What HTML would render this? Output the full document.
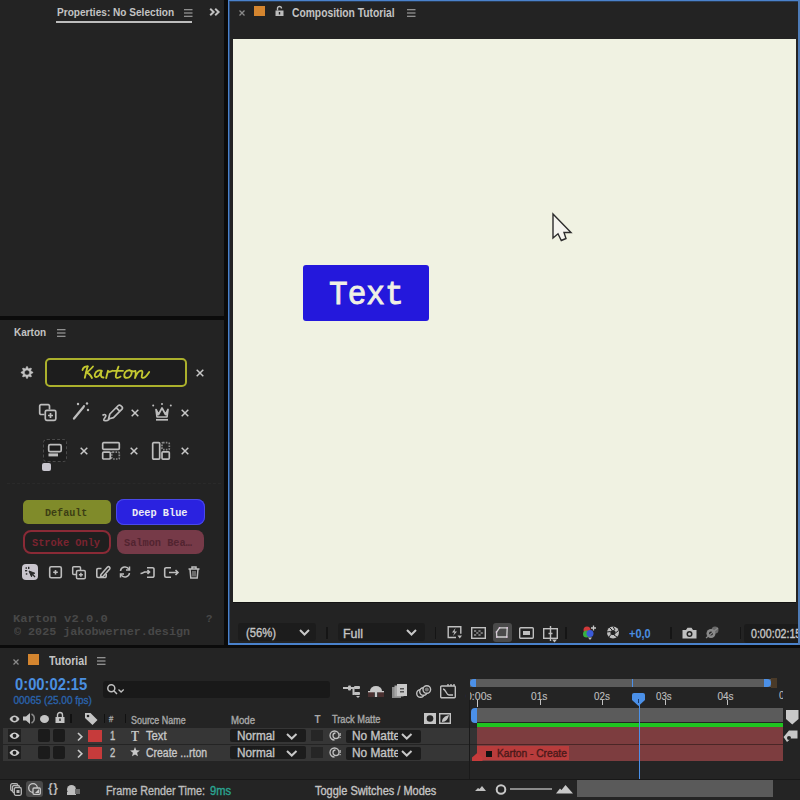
<!DOCTYPE html>
<html><head><meta charset="utf-8">
<style>
*{margin:0;padding:0;box-sizing:border-box}
html,body{width:800px;height:800px;overflow:hidden;background:#0b0b0b;font-family:"Liberation Sans",sans-serif}
.a{position:absolute}
.pn{position:absolute;background:#232323}
.t{position:absolute;white-space:nowrap;line-height:1;transform-origin:0 0}
svg{position:absolute;overflow:visible}
</style></head><body>
<!-- Properties panel -->
<div class="pn" style="left:0;top:0;width:224px;height:316px"></div>
<div class="t" style="left:57.08px;top:6.60px;font-size:11px;font-weight:bold;color:#c4c4c4;transform:scaleX(0.9167)">Properties: No Selection</div>
<div class="a" style="left:56px;top:21px;width:136px;height:2px;background:#bdbdbd"></div>
<svg style="left:184px;top:9px" width="9" height="8" viewBox="0 0 9 8"><path d="M0 0.75H8.5M0 4H8.5M0 7.25H8.5" stroke="#b4b4b4" stroke-width="1.1"/></svg>
<svg style="left:209px;top:8px" width="12" height="8" viewBox="0 0 12 8"><path d="M1.2 0.8L4.6 4L1.2 7.2M6.2 0.8L9.6 4L6.2 7.2" stroke="#c0c0c0" stroke-width="2" fill="none"/></svg>

<!-- Karton panel -->
<div class="pn" style="left:0;top:320px;width:224px;height:325px"></div>
<div class="t" style="left:13.93px;top:327.00px;font-size:11.5px;font-weight:bold;color:#c4c4c4;transform:scaleX(0.8667)">Karton</div>
<svg style="left:57px;top:329px" width="9" height="8" viewBox="0 0 9 8"><path d="M0 0.75H8.5M0 4H8.5M0 7.25H8.5" stroke="#b4b4b4" stroke-width="1.1"/></svg>
<!-- gear -->
<svg style="left:21px;top:366px" width="12" height="13" viewBox="0 0 12 13"><path d="M5.72 0.51 L6.28 0.51 L7.49 2.90 L10.04 2.06 L10.44 2.46 L9.60 5.01 L11.99 6.22 L11.99 6.78 L9.60 7.99 L10.44 10.54 L10.04 10.94 L7.49 10.10 L6.28 12.49 L5.72 12.49 L4.51 10.10 L1.96 10.94 L1.56 10.54 L2.40 7.99 L0.01 6.78 L0.01 6.22 L2.40 5.01 L1.56 2.46 L1.96 2.06 L4.51 2.90Z M8.60 6.5A2.6 2.6 0 1 0 3.40 6.5A2.6 2.6 0 1 0 8.60 6.5Z" fill="#c4c4c4" fill-rule="evenodd" stroke="#c4c4c4" stroke-width="0.6" stroke-linejoin="round"/></svg>
<!-- Karton box -->
<div class="a" style="left:45px;top:358px;width:142px;height:29px;border:2px solid #abb02c;border-radius:5px;background:#1d1d1d"></div>
<svg style="left:78px;top:360px" width="76" height="24" viewBox="0 0 76 24"><g stroke="#c4c830" stroke-width="1.85" fill="none" stroke-linecap="round" stroke-linejoin="round"><path d="M4.5 10C5 7.5 7.5 6 9.8 6.5"/><path d="M9.5 6.5L6.8 17.8"/><path d="M15 6.5C12.5 9.5 10.5 11.8 8 12.5C11 12.8 12.8 15.5 14 18"/><path d="M24 11C22 9.8 17.8 10.2 16.8 14.5C16.3 17.5 19 18 21.5 15L23.6 10.8C22.6 14 22.2 17.6 25.5 17.5"/><path d="M28.2 18L30 10.8C31.2 12.2 33 11.8 34.5 10.8"/><path d="M40.5 6.6C39.2 10 37.8 14.5 37.8 16.5C37.8 18.6 40.5 18.2 42.5 16.6"/><path d="M35.5 10.8H45"/><path d="M51 10.2C47.5 10.2 46 14 46.3 16C46.7 18.6 50.5 18.5 52.5 16C54.5 13.5 54 10.2 51 10.2C53 11.2 55 11.5 57 11.2"/><path d="M57.5 11C58 12.5 58 14.5 57 18C58.5 14 60.5 10.6 63.2 10.6C65.2 10.6 64.2 14 63.7 16C63.2 18 65.2 18.5 67.2 17C69.2 15.5 70.5 13 71.2 12"/></g></svg>
<svg style="left:196px;top:369px" width="8" height="8" viewBox="0 0 8 8"><path d="M0.7 0.7L7.3 7.3M7.3 0.7L0.7 7.3" stroke="#c8c8c8" stroke-width="1.5"/></svg>
<!-- row2 icons -->
<svg style="left:39px;top:404px" width="18" height="17" viewBox="0 0 18 17"><g stroke="#bdbdbd" stroke-width="1.7" fill="none"><path d="M5.5 10.5H2a1.3 1.3 0 0 1-1.3-1.3V2A1.3 1.3 0 0 1 2 .7h7.2a1.3 1.3 0 0 1 1.3 1.3v3.5"/><rect x="6.3" y="6.3" width="10.5" height="10" rx="1.5"/><path d="M11.5 9v5M9 11.5h5"/></g></svg>
<svg style="left:72px;top:402px" width="18" height="18" viewBox="0 0 18 18"><g stroke="#bdbdbd" stroke-width="2.3" fill="none" stroke-linecap="round"><path d="M2 16.5L11.5 5"/></g><g fill="#bdbdbd"><circle cx="6" cy="2" r="1.2"/><circle cx="15" cy="1.5" r="1.2"/><circle cx="16" cy="8" r="1.2"/><circle cx="12" cy="4" r="1"/></g></svg>
<svg style="left:101px;top:402px" width="21" height="21" viewBox="0 0 21 21"><g stroke="#bdbdbd" stroke-width="1.7" fill="none" stroke-linejoin="round"><g transform="translate(7.5 17) rotate(-45)"><path d="M0 0L4.5-2.6H16.5a1.6 1.6 0 0 1 1.6 1.6V1a1.6 1.6 0 0 1-1.6 1.6H4.5Z"/><path d="M13.5-2.6V2.6"/></g><path d="M1.5 13.5c2.5-2 4.5-.5 2.5 2s-1.5 3.5 1 3.2 2-1 3.5-1.5"/></g></svg>
<svg style="left:131px;top:408.5px" width="8" height="8" viewBox="0 0 8 8"><path d="M0.7 0.7L7.3 7.3M7.3 0.7L0.7 7.3" stroke="#c8c8c8" stroke-width="1.5"/></svg>
<svg style="left:152px;top:403px" width="20" height="18" viewBox="0 0 20 18"><g stroke="#bdbdbd" stroke-width="1.7" fill="none" stroke-linejoin="round"><path d="M4 6.5L6.5 11.5 10 5 13.5 11.5 16 6.5 15 14H5z"/><path d="M4 16.8h12"/></g><g fill="#bdbdbd"><circle cx="1.2" cy="2.5" r="1"/><circle cx="10" cy="1" r="1"/><circle cx="18.8" cy="2.5" r="1"/></g></svg>
<svg style="left:181px;top:408.5px" width="8" height="8" viewBox="0 0 8 8"><path d="M0.7 0.7L7.3 7.3M7.3 0.7L0.7 7.3" stroke="#c8c8c8" stroke-width="1.5"/></svg>
<!-- row3 icons -->
<div class="a" style="left:42.5px;top:439px;width:24px;height:23px;border:1px dashed #4a4a4a;border-radius:4px;background:#1e1e1e"></div>
<svg style="left:48px;top:444px" width="14" height="13" viewBox="0 0 14 13"><g stroke="#bdbdbd" stroke-width="1.7" fill="none"><rect x="0.7" y="0.7" width="12.5" height="7" rx="1.5"/></g><rect x="0.5" y="9.4" width="9.5" height="3" fill="#bdbdbd"/></svg>
<div class="a" style="left:42px;top:462.5px;width:8.5px;height:8.5px;border-radius:2px;background:#c8c6ce"></div>
<svg style="left:80px;top:446.5px" width="8" height="8" viewBox="0 0 8 8"><path d="M0.7 0.7L7.3 7.3M7.3 0.7L0.7 7.3" stroke="#c8c8c8" stroke-width="1.5"/></svg>
<svg style="left:101.5px;top:442px" width="18" height="18" viewBox="0 0 18 18"><g stroke="#bdbdbd" stroke-width="1.7" fill="none"><rect x="0.7" y="0.7" width="16.6" height="6.6" rx="1"/><rect x="0.7" y="10.2" width="7.6" height="6.8" rx="1"/><rect x="9.7" y="10.2" width="7.6" height="6.8" rx="1" stroke-dasharray="1.6 1.2" stroke="#8a8a8a"/></g></svg>
<svg style="left:130px;top:446.5px" width="8" height="8" viewBox="0 0 8 8"><path d="M0.7 0.7L7.3 7.3M7.3 0.7L0.7 7.3" stroke="#c8c8c8" stroke-width="1.5"/></svg>
<svg style="left:152px;top:442px" width="18" height="18" viewBox="0 0 18 18"><g stroke="#bdbdbd" stroke-width="1.7" fill="none"><rect x="0.7" y="0.7" width="7" height="16.4" rx="1"/><rect x="10" y="0.7" width="7.3" height="7" rx="1" stroke-dasharray="1.6 1.2" stroke="#8a8a8a"/><rect x="10" y="9.8" width="7.3" height="7.3" rx="1"/></g></svg>
<svg style="left:180.5px;top:446.5px" width="8" height="8" viewBox="0 0 8 8"><path d="M0.7 0.7L7.3 7.3M7.3 0.7L0.7 7.3" stroke="#c8c8c8" stroke-width="1.5"/></svg>
<!-- faint dashed separator -->
<div class="a" style="left:7px;top:483px;width:214px;height:0;border-top:1px dashed #2a2a2a"></div>
<!-- buttons -->
<div class="a" style="left:22.5px;top:499.5px;width:88px;height:24.5px;border-radius:5px;background:#808b2a"></div>
<div class="t" style="left:45.00px;top:509.00px;font-family:'Liberation Mono',monospace;font-size:10px;font-weight:bold;color:#3c3e14;transform:scaleX(1.0073)">Default</div>
<div class="a" style="left:116px;top:499px;width:89px;height:25.5px;border-radius:8px;background:#2a22e0;box-shadow:0 0 0 1px #4a4ae8 inset"></div>
<div class="t" style="left:132.00px;top:509.00px;font-family:'Liberation Mono',monospace;font-size:10px;font-weight:bold;color:#ececf4;transform:scaleX(1.0278)">Deep Blue</div>
<div class="a" style="left:22.5px;top:529.5px;width:88px;height:24.5px;border-radius:8px;border:2px solid #8a2a36;background:#1f1f1f"></div>
<div class="t" style="left:32.00px;top:539.00px;font-family:'Liberation Mono',monospace;font-size:10px;font-weight:bold;color:#7a2430;transform:scaleX(1.0303)">Stroke Only</div>
<div class="a" style="left:116.5px;top:529.5px;width:87.5px;height:24.5px;border-radius:8px;background:#763a48"></div>
<div class="t" style="left:124.00px;top:539.00px;font-family:'Liberation Mono',monospace;font-size:10px;font-weight:bold;color:#522430;transform:scaleX(1.0273)">Salmon Bea…</div>
<!-- bottom icons -->
<div class="a" style="left:22px;top:564px;width:16px;height:16px;border-radius:4px;background:#c9c5cd"></div>
<svg style="left:24px;top:566px" width="12" height="12" viewBox="0 0 12 12"><path d="M5 5L10.8 7.2 8.5 8.3 7.5 10.8Z" fill="#2a2a2a" stroke="#2a2a2a" stroke-width="1" stroke-linejoin="round"/><path d="M8.6 8.4L11 11" stroke="#2a2a2a" stroke-width="1.3"/><g fill="#2a2a2a"><rect x="1" y="4" width="2.2" height="1.4"/><rect x="4" y="0.8" width="1.4" height="2.2"/><rect x="1.5" y="1.3" width="1.5" height="1.5"/><rect x="1.8" y="7.2" width="1.5" height="1.5"/></g></svg>
<svg style="left:49px;top:566px" width="13" height="12.5" viewBox="0 0 13 12.5"><g stroke="#bdbdbd" stroke-width="1.6" fill="none"><rect x="0.7" y="0.7" width="11.6" height="11" rx="1.5"/><path d="M6.5 4v4.5M4.2 6.2h4.6"/></g></svg>
<svg style="left:72px;top:565.5px" width="14" height="13.5" viewBox="0 0 14 13.5"><g stroke="#bdbdbd" stroke-width="1.5" fill="none"><path d="M4.5 8.5H1.7A1 1 0 0 1 .7 7.5V1.7A1 1 0 0 1 1.7.7h5.8a1 1 0 0 1 1 1v2.8"/><rect x="4.5" y="4.5" width="8.8" height="8.3" rx="1.3"/><path d="M8.9 6.8v4M6.9 8.8h4"/></g></svg>
<svg style="left:95.5px;top:564.5px" width="14" height="13.5" viewBox="0 0 14 13.5"><g stroke="#bdbdbd" stroke-width="1.6" fill="none" stroke-linejoin="round"><path d="M5 9.5l6.5-7.5a1.5 1.5 0 0 1 2.2 2L7 11.5 4.5 12z"/><path d="M5.5 3.5H2a1.2 1.2 0 0 0-1.2 1.2v6.6A1.2 1.2 0 0 0 2 12.5h7a1.2 1.2 0 0 0 1.2-1.2V9"/></g></svg>
<svg style="left:119px;top:566px" width="12" height="12" viewBox="0 0 12 12"><g stroke="#bdbdbd" stroke-width="1.5" fill="none"><path d="M1.5 5A4.5 4.5 0 0 1 10 3.5M10.5 7A4.5 4.5 0 0 1 2 8.5"/><path d="M10.5 0.5v3.5H7M1.5 11.5V8H5"/></g></svg>
<svg style="left:140px;top:567px" width="15" height="11" viewBox="0 0 15 11"><g stroke="#bdbdbd" stroke-width="1.6" fill="none"><path d="M7 .7h5.5a1.5 1.5 0 0 1 1.5 1.5v6.6a1.5 1.5 0 0 1-1.5 1.5H7"/><path d="M.5 6.5c2 0 3-1 4-1.5h4.5M7.5 3l2 2-2 2"/></g></svg>
<svg style="left:164px;top:567px" width="15" height="11" viewBox="0 0 15 11"><g stroke="#bdbdbd" stroke-width="1.6" fill="none"><path d="M7 .7H2.2A1.5 1.5 0 0 0 .7 2.2v6.6a1.5 1.5 0 0 0 1.5 1.5H7"/><path d="M5 5.5h9M11.5 3l2.5 2.5-2.5 2.5"/></g></svg>
<svg style="left:188px;top:565.5px" width="12" height="13" viewBox="0 0 12 13"><g stroke="#bdbdbd" stroke-width="1.5" fill="none"><path d="M.5 3h11M4 3V1h4v2M2 3l.8 9h6.4L10 3"/></g><rect x="4" y="5" width="4" height="5.5" fill="#6a6a6a"/></svg>
<!-- footer -->
<div class="t" style="left:12.69px;top:614.20px;font-family:'Liberation Mono',monospace;font-size:11px;font-weight:bold;color:#484848;transform:scaleX(1.1059)">Karton v2.0.0</div>
<div class="t" style="left:206.40px;top:614.20px;font-family:'Liberation Mono',monospace;font-size:11px;font-weight:bold;color:#484848;transform:scaleX(0.9667)">?</div>
<div class="t" style="left:13.80px;top:626.70px;font-family:'Liberation Mono',monospace;font-size:11px;font-weight:bold;color:#484848;transform:scaleX(1.0667)">© 2025 jakobwerner.design</div>
<!-- Comp panel -->
<div class="a" style="left:227.5px;top:0;width:572.5px;height:645px;background:#4a82cc"></div>
<div class="pn" style="left:229px;top:1px;width:569px;height:642px"></div>
<div class="a" style="left:229px;top:1px;width:1px;height:642px;background:#2a4a78"></div>
<div class="a" style="left:229.5px;top:1px;width:568.5px;height:1px;background:#2a3c54"></div>
<svg style="left:239px;top:10px" width="6" height="6" viewBox="0 0 6 6"><path d="M0.5 0.5L5.5 5.5M5.5 0.5L0.5 5.5" stroke="#8a8a8a" stroke-width="1.3"/></svg>
<div class="a" style="left:254px;top:6px;width:10.5px;height:10px;background:#d4852f"></div>
<svg style="left:275px;top:5.5px" width="9" height="10" viewBox="0 0 9 10"><g fill="none" stroke="#bcbcbc" stroke-width="1.4"><path d="M2.5 4.5V2.5a2 2 0 0 1 4 0"/></g><rect x="0.5" y="4.5" width="8" height="5.5" fill="#bcbcbc"/><rect x="3.8" y="6" width="1.4" height="2.5" fill="#232323"/></svg>
<div class="t" style="left:292.00px;top:7.40px;font-size:12px;font-weight:bold;color:#c4c4c4;transform:scaleX(0.8571)">Composition Tutorial</div>
<svg style="left:407px;top:9px" width="9" height="8" viewBox="0 0 9 8"><path d="M0 0.75H8.5M0 4H8.5M0 7.25H8.5" stroke="#b4b4b4" stroke-width="1.1"/></svg>
<!-- canvas -->
<div class="a" style="left:233px;top:39px;width:563px;height:563px;background:#f0f2e2"></div>
<div class="a" style="left:302.5px;top:265px;width:126px;height:56px;background:#2418dc;border-radius:3px"></div>
<div class="t" style="left:329.08px;top:278.25px;font-family:'Liberation Mono',monospace;font-size:34px;color:#f0f0e4;-webkit-text-stroke:0.9px #f0f0e4;transform:scaleX(0.9154)">Text</div>
<svg style="left:545px;top:208px" width="30" height="36" viewBox="545 208 30 36"><path d="M553 214V238L558 233.8 561.3 240.5 566 238.5 564 232.5H571Z" fill="#f4f4ee" stroke="#2c2c2c" stroke-width="1.4" stroke-linejoin="miter"/></svg>
<div class="a" style="left:233px;top:602px;width:563px;height:1px;background:#141414"></div>
<!-- toolbar -->
<div class="a" style="left:326px;top:627px;width:1.5px;height:12px;background:#151515"></div>
<div class="a" style="left:434.5px;top:627px;width:1.5px;height:12px;background:#151515"></div>
<div class="a" style="left:565px;top:627px;width:1.5px;height:12px;background:#151515"></div>
<div class="a" style="left:670px;top:627px;width:1.5px;height:12px;background:#151515"></div>
<div class="a" style="left:739.5px;top:627px;width:1.5px;height:12px;background:#151515"></div>
<div class="a" style="left:238px;top:623px;width:78px;height:18px;border-radius:3px;background:#1c1c1c"></div>
<div class="t" style="left:246.00px;top:627.00px;font-size:12px;color:#c4c4c4;-webkit-text-stroke-width:0.35px;transform:scaleX(0.9375)">(56%)</div>
<svg style="left:298.5px;top:629px" width="11" height="7" viewBox="0 0 11 7"><path d="M1 1L5.5 5.5 10 1" stroke="#c8c8c8" stroke-width="2" fill="none"/></svg>
<div class="a" style="left:338px;top:623px;width:87px;height:18px;border-radius:3px;background:#1c1c1c"></div>
<div class="t" style="left:343.37px;top:627.80px;font-size:12px;color:#c4c4c4;-webkit-text-stroke-width:0.35px;transform:scaleX(1.0333)">Full</div>
<svg style="left:406px;top:629px" width="11" height="7" viewBox="0 0 11 7"><path d="M1 1L5.5 5.5 10 1" stroke="#c8c8c8" stroke-width="2" fill="none"/></svg>
<!-- toolbar icons -->
<svg style="left:446.5px;top:626px" width="15" height="13" viewBox="0 0 15 13"><g stroke="#c0c0c0" stroke-width="1.4" fill="none"><path d="M9 11.5H1.2V.7h12.6v7"/></g><path d="M8.5 2L5 6.5h2.5L6 10l4-4.5H7.5z" fill="#c0c0c0"/><path d="M10.5 9.5h4.5l-2.25 3z" fill="#c0c0c0"/></svg>
<svg style="left:470.5px;top:627px" width="15" height="12" viewBox="0 0 15 12"><rect x="0.7" y="0.7" width="13.6" height="10.6" stroke="#c0c0c0" stroke-width="1.4" fill="none"/><g fill="#777"><rect x="3" y="3" width="2.2" height="2"/><rect x="7.4" y="3" width="2.2" height="2"/><rect x="5.2" y="5" width="2.2" height="2"/><rect x="9.6" y="5" width="2.2" height="2"/><rect x="3" y="7" width="2.2" height="2"/><rect x="7.4" y="7" width="2.2" height="2"/></g></svg>
<div class="a" style="left:492.5px;top:622.5px;width:19px;height:19px;border-radius:3px;background:#4a4a4a"></div>
<svg style="left:495px;top:626px" width="14" height="12" viewBox="0 0 14 12"><path d="M4.5 1.8H12.2L11.8 11H1.8L1.5 6z" stroke="#d0d0d0" stroke-width="1.3" fill="none"/><g fill="#e0c0e0"><rect x="3.8" y="1.1" width="1.4" height="1.4"/><rect x="11.5" y="1.1" width="1.4" height="1.4"/><rect x="11.1" y="10.3" width="1.4" height="1.4"/><rect x="1.1" y="10.3" width="1.4" height="1.4"/><rect x="0.8" y="5.3" width="1.4" height="1.4"/></g></svg>
<svg style="left:519px;top:627px" width="15" height="12" viewBox="0 0 15 12"><rect x="0.7" y="0.7" width="13.6" height="10.6" rx="1" stroke="#c0c0c0" stroke-width="1.4" fill="none"/><rect x="4" y="4" width="7" height="4" fill="#c0c0c0"/></svg>
<svg style="left:542.5px;top:625.5px" width="15" height="17" viewBox="0 0 15 17"><rect x="0.7" y="2.7" width="13.6" height="9.6" stroke="#c0c0c0" stroke-width="1.4" fill="none"/><path d="M7.5 0v15M5.5 7.5h4" stroke="#c0c0c0" stroke-width="1.4"/><path d="M9 13.5h5l-2.5 3z" fill="#c0c0c0"/></svg>
<svg style="left:581.5px;top:625px" width="15" height="15" viewBox="0 0 15 15"><circle cx="5" cy="5" r="3.5" fill="#d03a3a"/><circle cx="4.5" cy="9" r="3.5" fill="#38b040"/><circle cx="8" cy="8.5" r="3.5" fill="#3a5ad8"/><path d="M11.5 0.5v5M9 3h5" stroke="#c8c8c8" stroke-width="1.3"/><path d="M6 12.5h4l-2 2.5z" fill="#c0c0c0"/></svg>
<svg style="left:606px;top:626px" width="14" height="13" viewBox="0 0 14 13"><circle cx="7" cy="6.5" r="6" fill="#c0c0c0"/><circle cx="7" cy="6.5" r="2.6" fill="#232323"/><g stroke="#232323" stroke-width="1"><path d="M7 .5L9 4M12.5 4.5L9.5 7M11 11L8 9M3 11L5 8.3M1 6L4.6 5.5M3.5 1.5L6 4"/></g></svg>
<div class="t" style="left:629.00px;top:627.80px;font-size:12px;font-weight:bold;color:#4a8ee0;transform:scaleX(0.9130)">+0,0</div>
<svg style="left:681.5px;top:627px" width="15" height="12" viewBox="0 0 15 12"><path d="M.5 3h3.5L5.5 .8h4L11 3h3.5v8.5H.5z" fill="#c0c0c0"/><circle cx="7.5" cy="7" r="3" fill="#232323"/><circle cx="7.5" cy="7" r="1.5" fill="#c0c0c0"/></svg>
<svg style="left:705px;top:625.5px" width="15" height="13" viewBox="0 0 15 13"><circle cx="10" cy="4" r="3.5" fill="#6a6a6a"/><circle cx="6" cy="7.5" r="4.5" fill="#8a8a8a"/><circle cx="6" cy="7.5" r="2" fill="#232323"/><path d="M1 12L13 2" stroke="#8a8a8a" stroke-width="1.2"/></svg>
<div class="a" style="left:744px;top:623.5px;width:60px;height:19px;border-radius:3px;background:#1b1b1b"></div>
<div class="t" style="left:750.50px;top:628.00px;font-size:12px;color:#c8c8c8;-webkit-text-stroke-width:0.35px;transform:scaleX(0.8860)">0:00:02:15</div>
<!-- re-draw right blue border over timecode overflow -->
<div class="a" style="left:798px;top:0;width:2px;height:645px;background:#4e7cb8"></div>
<!-- Timeline panel -->
<div class="pn" style="left:0;top:648px;width:800px;height:152px;background:#242424"></div>
<svg style="left:13px;top:659px" width="6" height="6" viewBox="0 0 6 6"><path d="M0.5 0.5L5.5 5.5M5.5 0.5L0.5 5.5" stroke="#8a8a8a" stroke-width="1.3"/></svg>
<div class="a" style="left:28px;top:654px;width:10.5px;height:11px;background:#d4852f"></div>
<div class="t" style="left:49.00px;top:654.50px;font-size:12px;font-weight:bold;color:#c4c4c4;transform:scaleX(0.8837)">Tutorial</div>
<svg style="left:97px;top:657px" width="9" height="8" viewBox="0 0 9 8"><path d="M0 0.75H8.5M0 4H8.5M0 7.25H8.5" stroke="#b4b4b4" stroke-width="1.1"/></svg>
<div class="t" style="left:15.00px;top:677.00px;font-size:16px;font-weight:bold;color:#4a8fe0;transform:scaleX(0.9231)">0:00:02:15</div>
<div class="t" style="left:13.50px;top:695.50px;font-size:10px;color:#2a62aa;-webkit-text-stroke-width:0.35px">00065 (25.00 fps)</div>
<!-- search -->
<div class="a" style="left:103px;top:681px;width:227px;height:16.5px;border-radius:3px;background:#191919"></div>
<svg style="left:107px;top:684px" width="18" height="11" viewBox="0 0 18 11"><g stroke="#c0c0c0" stroke-width="1.5" fill="none"><circle cx="4.3" cy="4.2" r="3.5"/><path d="M6.8 6.8L10 10"/><path d="M11.5 5.5l2.6 2.5 2.6-2.5" stroke-width="1.3"/></g></svg>
<!-- header icons -->
<svg style="left:343px;top:685px" width="18" height="13" viewBox="0 0 18 13"><g fill="#c0c0c0"><rect x="0" y="2" width="5" height="2"/><rect x="5" y="0.5" width="3" height="5" rx="1"/><rect x="8" y="2" width="3" height="2"/><rect x="9.5" y="2" width="2" height="8"/><rect x="11" y="1" width="6" height="3" rx="1"/><rect x="11" y="7" width="6" height="3" rx="1"/></g><path d="M13 11h4l-2 2z" fill="#c0c0c0"/></svg>
<svg style="left:368px;top:685px" width="16" height="12" viewBox="0 0 16 12"><path d="M2 6a6 5 0 0 1 12 0z" fill="#c8c8c8"/><rect x="6.8" y="5" width="2.4" height="7" fill="#c8c8c8"/><rect x="0" y="7" width="6" height="5" fill="#4a3030"/><rect x="10" y="7" width="6" height="5" fill="#4a3030"/><rect x="0" y="6" width="16" height="1.3" fill="#c8c8c8"/></svg>
<svg style="left:392px;top:684px" width="15" height="14" viewBox="0 0 15 14"><rect x="0" y="3" width="9" height="11" fill="#8a8a8a"/><rect x="2.5" y="1.5" width="9" height="11" fill="#a8a8a8"/><rect x="5" y="0" width="10" height="12" fill="#c8c8c8"/><rect x="8" y="4" width="4" height="1.5" fill="#555"/><rect x="8" y="7" width="4" height="1.5" fill="#555"/></svg>
<svg style="left:416px;top:685px" width="16" height="13" viewBox="0 0 16 13"><g stroke="#c0c0c0" stroke-width="1.4" fill="#242424"><circle cx="4.5" cy="8.5" r="3.8"/><circle cx="7.5" cy="6.5" r="3.8"/><circle cx="10.8" cy="4.5" r="3.8"/></g><circle cx="10.8" cy="4.5" r="2" fill="#777"/></svg>
<svg style="left:440px;top:682.5px" width="16" height="15.5" viewBox="0 0 16 15.5"><g stroke="#c0c0c0" stroke-width="1.4" fill="none"><rect x="0.7" y="3" width="14.6" height="11.8" rx="1"/><path d="M3 6c3 0 3 6 6 6h4"/><path d="M8 1v2M11 1v2M14 1v2"/></g></svg>
<!-- column header row -->
<svg style="left:9px;top:714.5px" width="11" height="8" viewBox="0 0 11 8"><path d="M.5 4C2 1.2 4 .5 5.5.5S9 1.2 10.5 4C9 6.8 7 7.5 5.5 7.5S2 6.8.5 4z" fill="#c4c4c4"/><circle cx="5.5" cy="4" r="2" fill="#242424"/></svg>
<svg style="left:23px;top:713px" width="13" height="11" viewBox="0 0 13 11"><path d="M0 3.5h3L7 0v11L3 7.5H0z" fill="#c4c4c4"/><path d="M8.5 1a5 5 0 0 1 0 9" stroke="#888" stroke-width="1.5" fill="none"/></svg>
<circle/>
<div class="a" style="left:40px;top:714.5px;width:9px;height:8px;border-radius:50%;background:#c4c4c4"></div>
<svg style="left:54.5px;top:712px" width="10" height="11" viewBox="0 0 10 11"><path d="M2.5 5V3a2.5 2.5 0 0 1 5 0v2" stroke="#c4c4c4" stroke-width="1.4" fill="none"/><rect x="0.5" y="5" width="9" height="6" fill="#c4c4c4"/><rect x="4.3" y="6.5" width="1.4" height="2.5" fill="#242424"/></svg>
<div class="a" style="left:70px;top:714px;width:1.5px;height:9px;background:#111"></div>
<svg style="left:83.5px;top:711.5px" width="14" height="13" viewBox="0 0 14 13"><path d="M1 1h5.5l7 7-5 5-7.5-7z" fill="#c4c4c4"/><circle cx="4" cy="4" r="1.3" fill="#242424"/></svg>
<div class="a" style="left:103.5px;top:714px;width:1.5px;height:9px;background:#111"></div>
<div class="t" style="left:108.75px;top:715.00px;font-size:9px;color:#a0a0a0;-webkit-text-stroke-width:0.35px;transform:scaleX(0.8333)">#</div>
<div class="a" style="left:124.5px;top:714px;width:1.5px;height:9px;background:#111"></div>
<div class="t" style="left:130.50px;top:715.50px;font-size:10px;color:#a8a8a8;-webkit-text-stroke-width:0.35px;transform:scaleX(0.8934)">Source Name</div>
<div class="t" style="left:231.00px;top:715.50px;font-size:10px;color:#a8a8a8;-webkit-text-stroke-width:0.35px;transform:scaleX(0.9600)">Mode</div>
<div class="t" style="left:314.40px;top:714.50px;font-size:10px;font-weight:bold;color:#a8a8a8">T</div>
<div class="t" style="left:331.50px;top:715.00px;font-size:10px;color:#a8a8a8;-webkit-text-stroke-width:0.35px;transform:scaleX(0.9231)">Track Matte</div>
<svg style="left:423.5px;top:713px" width="12" height="11" viewBox="0 0 12 11"><rect x="0" y="0" width="12" height="11" fill="#c4c4c4"/><circle cx="6" cy="5.5" r="3.3" fill="#242424"/></svg>
<svg style="left:439px;top:713px" width="12" height="11" viewBox="0 0 12 11"><path d="M.7.7h10.6v9.6H.7z" stroke="#c4c4c4" stroke-width="1.4" fill="none"/><path d="M3 9c0-4 3-6 7-7-1 4-3 7-7 7z" fill="#c4c4c4"/></svg>
<!-- layer rows left -->
<div class="a" style="left:3px;top:727.75px;width:466px;height:16px;background:#363636"></div>
<div class="a" style="left:3px;top:745px;width:466px;height:16px;background:#363636"></div>
<div class="a" style="left:470px;top:728px;width:7px;height:16px;background:#333"></div>
<div class="a" style="left:470px;top:745px;width:7px;height:15.5px;background:#333"></div>
<!-- row1 -->
<div class="a" style="left:8px;top:729px;width:12.5px;height:13px;background:#202020"></div>
<svg style="left:9px;top:731.5px" width="11" height="7.5" viewBox="0 0 11 7.5"><path d="M.5 3.75C2 1.2 4 .5 5.5.5S9 1.2 10.5 3.75C9 6.3 7 7 5.5 7S2 6.3.5 3.75z" fill="#d0d0d0"/><circle cx="5.5" cy="3.75" r="1.9" fill="#202020"/></svg>
<div class="a" style="left:38px;top:729px;width:11.5px;height:12.5px;border-radius:2px;background:#1b1b1b"></div>
<div class="a" style="left:53px;top:729px;width:12px;height:12.5px;border-radius:2px;background:#1b1b1b"></div>
<svg style="left:76.5px;top:731.5px" width="6" height="9.5" viewBox="0 0 6 9.5"><path d="M1 1l3.8 3.75L1 8.5" stroke="#c8c8c8" stroke-width="1.7" fill="none"/></svg>
<div class="a" style="left:88px;top:729.5px;width:13.5px;height:12px;background:#c63b3b"></div>
<div class="t" style="left:110.00px;top:730.00px;font-size:12px;color:#c4c4c4;-webkit-text-stroke-width:0.35px;transform:scaleX(0.7857)">1</div>
<div class="t" style="left:131.00px;top:730.00px;font-family:'Liberation Serif',serif;font-size:14px;font-weight:bold;color:#c4c4c4;transform:scaleX(0.8611)">T</div>
<div class="t" style="left:146.00px;top:730.00px;font-size:12px;color:#c8c8c8;-webkit-text-stroke-width:0.35px;transform:scaleX(0.9348)">Text</div>
<div class="a" style="left:229.5px;top:729px;width:76px;height:13px;border-radius:2px;background:#1c1c1c"></div>
<div class="t" style="left:236.52px;top:730.25px;font-size:12px;color:#c4c4c4;-webkit-text-stroke-width:0.35px;transform:scaleX(0.9797)">Normal</div>
<svg style="left:286px;top:733px" width="11.5" height="7" viewBox="0 0 11.5 7"><path d="M1 1l4.75 4.5L10.5 1" stroke="#c8c8c8" stroke-width="2" fill="none"/></svg>
<div class="a" style="left:311px;top:729.5px;width:11.5px;height:11.5px;background:#262626"></div>
<svg style="left:328.5px;top:730px" width="12" height="11" viewBox="0 0 12 11"><path d="M5.5 10A4.5 4.5 0 1 1 10 5.5c0 2-1.5 3-3 3S4 7.5 4 5.5 5 3 6.5 3" stroke="#c0c0c0" stroke-width="1.3" fill="none"/><rect x="10.5" y="3" width="1.2" height="3" fill="#c0c0c0"/><rect x="10.5" y="7" width="1.2" height="1.2" fill="#c0c0c0"/></svg>
<div class="a" style="left:345.5px;top:729.5px;width:75px;height:13px;border-radius:2px;background:#1c1c1c"></div>
<div class="t" style="left:351.51px;top:730.25px;font-size:12px;color:#c4c4c4;-webkit-text-stroke-width:0.35px;transform:scaleX(0.9896)">No Matte</div>
<div class="a" style="left:397.5px;top:730px;width:4px;height:12px;background:#1c1c1c"></div>
<svg style="left:401px;top:733px" width="11.5" height="7" viewBox="0 0 11.5 7"><path d="M1 1l4.75 4.5L10.5 1" stroke="#c8c8c8" stroke-width="2" fill="none"/></svg>
<!-- row2 -->
<div class="a" style="left:8px;top:746px;width:12.5px;height:13px;background:#202020"></div>
<svg style="left:9px;top:748.5px" width="11" height="7.5" viewBox="0 0 11 7.5"><path d="M.5 3.75C2 1.2 4 .5 5.5.5S9 1.2 10.5 3.75C9 6.3 7 7 5.5 7S2 6.3.5 3.75z" fill="#d0d0d0"/><circle cx="5.5" cy="3.75" r="1.9" fill="#202020"/></svg>
<div class="a" style="left:38px;top:746px;width:11.5px;height:12.5px;border-radius:2px;background:#1b1b1b"></div>
<div class="a" style="left:53px;top:746px;width:12px;height:12.5px;border-radius:2px;background:#1b1b1b"></div>
<svg style="left:76.5px;top:748.5px" width="6" height="9.5" viewBox="0 0 6 9.5"><path d="M1 1l3.8 3.75L1 8.5" stroke="#c8c8c8" stroke-width="1.7" fill="none"/></svg>
<div class="a" style="left:88px;top:746.5px;width:13.5px;height:12px;background:#c63b3b"></div>
<div class="t" style="left:110.00px;top:747.00px;font-size:12px;color:#c4c4c4;-webkit-text-stroke-width:0.35px;transform:scaleX(0.7857)">2</div>
<svg style="left:129.5px;top:746.5px" width="10" height="10" viewBox="0 0 10 10"><path d="M5 0l1.3 3.3 3.6.2-2.8 2.3.9 3.5L5 7.4 2 9.3l.9-3.5L.1 3.5l3.6-.2z" fill="#c8c8c8"/></svg>
<div class="t" style="left:146.00px;top:747.00px;font-size:12px;color:#c8c8c8;-webkit-text-stroke-width:0.35px;transform:scaleX(0.8714)">Create ...rton</div>
<div class="a" style="left:229.5px;top:746px;width:76px;height:13px;border-radius:2px;background:#1c1c1c"></div>
<div class="t" style="left:236.52px;top:747.25px;font-size:12px;color:#c4c4c4;-webkit-text-stroke-width:0.35px;transform:scaleX(0.9797)">Normal</div>
<svg style="left:286px;top:750px" width="11.5" height="7" viewBox="0 0 11.5 7"><path d="M1 1l4.75 4.5L10.5 1" stroke="#c8c8c8" stroke-width="2" fill="none"/></svg>
<div class="a" style="left:311px;top:746.5px;width:11.5px;height:11.5px;background:#262626"></div>
<svg style="left:328.5px;top:747px" width="12" height="11" viewBox="0 0 12 11"><path d="M5.5 10A4.5 4.5 0 1 1 10 5.5c0 2-1.5 3-3 3S4 7.5 4 5.5 5 3 6.5 3" stroke="#c0c0c0" stroke-width="1.3" fill="none"/><rect x="10.5" y="3" width="1.2" height="3" fill="#c0c0c0"/><rect x="10.5" y="7" width="1.2" height="1.2" fill="#c0c0c0"/></svg>
<div class="a" style="left:345.5px;top:746.5px;width:75px;height:13px;border-radius:2px;background:#1c1c1c"></div>
<div class="t" style="left:351.51px;top:747.25px;font-size:12px;color:#c4c4c4;-webkit-text-stroke-width:0.35px;transform:scaleX(0.9896)">No Matte</div>
<div class="a" style="left:397.5px;top:747px;width:4px;height:12px;background:#1c1c1c"></div>
<svg style="left:401px;top:750px" width="11.5" height="7" viewBox="0 0 11.5 7"><path d="M1 1l4.75 4.5L10.5 1" stroke="#c8c8c8" stroke-width="2" fill="none"/></svg>
<!-- column separator -->
<div class="a" style="left:469px;top:700px;width:1px;height:80px;background:#1a1a1a"></div>
<!-- timeline graph -->
<div class="a" style="left:470px;top:678.5px;width:306px;height:8.5px;background:#5c5c5c"></div>
<div class="a" style="left:470px;top:678.5px;width:6px;height:8.5px;border-radius:4px 0 0 4px;background:#4b90e8"></div>
<div class="a" style="left:764px;top:678.5px;width:7px;height:8.5px;border-radius:0 4px 4px 0;background:#4b90e8"></div>
<div class="a" style="left:771px;top:678px;width:6px;height:9.5px;background:#4a3a28"></div>
<div class="a" style="left:632px;top:678.5px;width:1px;height:8.5px;background:#4b90e8"></div>
<!-- ruler labels -->
<div class="t" style="left:466.00px;top:692.00px;font-size:10px;color:#c0c0c0;-webkit-text-stroke-width:0.1px;transform:scaleX(1.0521)">0:00s</div>
<div class="a" style="left:466px;top:688px;width:4px;height:12px;background:#242424"></div>
<div class="t" style="left:531.25px;top:692.00px;font-size:10px;color:#c0c0c0;-webkit-text-stroke-width:0.1px;transform:scaleX(1.0156)">01s</div>
<div class="t" style="left:593.75px;top:692.00px;font-size:10px;color:#c0c0c0;-webkit-text-stroke-width:0.1px;transform:scaleX(0.9844)">02s</div>
<div class="t" style="left:655.50px;top:692.00px;font-size:10px;color:#c0c0c0;-webkit-text-stroke-width:0.1px;transform:scaleX(0.9688)">03s</div>
<div class="t" style="left:717.50px;top:692.00px;font-size:10px;color:#c0c0c0;-webkit-text-stroke-width:0.1px">04s</div>
<div class="t" style="left:779px;top:691px;font-size:10px;color:#c0c0c0">0</div>
<div class="a" style="left:782.5px;top:688px;width:18px;height:12px;background:#242424"></div>
<div class="a" style="left:477px;top:699.5px;width:1px;height:7px;background:#c8c8c8"></div>
<div class="a" style="left:539.5px;top:700px;width:1px;height:5px;background:#c0c0c0"></div>
<div class="a" style="left:602px;top:700px;width:1px;height:5px;background:#c0c0c0"></div>
<div class="a" style="left:664.5px;top:700px;width:1px;height:5px;background:#c0c0c0"></div>
<div class="a" style="left:727px;top:700px;width:1px;height:5px;background:#c0c0c0"></div>
<!-- layer bar and comp rows -->
<div class="a" style="left:477px;top:707.5px;width:305.5px;height:14.5px;background:#5b5b5b"></div>
<div class="a" style="left:470.5px;top:707.5px;width:6px;height:15.5px;border-radius:4px 0 0 4px;background:#4b90e8"></div>
<div class="a" style="left:477px;top:723px;width:305.5px;height:4px;background:#1fc41f"></div>
<div class="a" style="left:477px;top:727px;width:305.5px;height:16.5px;background:#7d3d3f"></div>
<div class="a" style="left:477px;top:743.5px;width:305.5px;height:1.5px;background:#4a2626"></div>
<div class="a" style="left:477px;top:745px;width:305.5px;height:15.5px;background:#7d3d3f"></div>
<div class="a" style="left:477px;top:746px;width:91.5px;height:14px;background:#b83c3c"></div>
<div class="a" style="left:486px;top:750.5px;width:6px;height:6px;background:#111"></div>
<div class="t" style="left:496.50px;top:749.00px;font-size:10px;color:#4a1a1a;-webkit-text-stroke-width:0.35px;transform:scaleX(1.0221)">Karton - Create</div>
<svg style="left:472px;top:753px" width="10.5" height="8" viewBox="0 0 10.5 8"><path d="M0 8V4.5L5.25 0 10.5 4.5V8z" fill="#c63b3b"/></svg>
<!-- right icons -->
<svg style="left:785.5px;top:710px" width="12.5" height="14.5" viewBox="0 0 12.5 14.5"><path d="M0 0h12.5v9L6.25 14.5 0 9z" fill="#c8c8c8"/></svg>
<svg style="left:783px;top:730px" width="15" height="12.5" viewBox="0 0 15 12.5"><path d="M6 0.5h8.5v8H8L4 12 0.5 7z" fill="#c8c8c8"/><circle cx="6" cy="8" r="2" fill="#242424"/></svg>
<!-- playhead -->
<div class="a" style="left:638.5px;top:700px;width:1.2px;height:80px;background:#4b90e8"></div>
<svg style="left:632px;top:692.5px" width="13" height="13" viewBox="0 0 13 13"><path d="M0 2a2 2 0 0 1 2-2h9a2 2 0 0 1 2 2v5L6.5 13 0 7z" fill="#4b90e8"/><path d="M6.5 6v4" stroke="#1a3a6a" stroke-width="1"/></svg>
<!-- bottom bar -->
<div class="a" style="left:0;top:779px;width:800px;height:1px;background:#181818"></div>
<svg style="left:10px;top:782.5px" width="12" height="13" viewBox="0 0 12 13"><g stroke="#b8b8b8" stroke-width="1.3" fill="none"><rect x="0.7" y="0.7" width="7" height="7" rx="1.5"/><rect x="2.5" y="2.5" width="7" height="7" rx="1.5" fill="#242424"/><rect x="4.3" y="4.5" width="7" height="7.8" rx="1.5" fill="#242424"/></g><rect x="6.5" y="7" width="3" height="3" fill="#b8b8b8"/></svg>
<div class="a" style="left:26px;top:781px;width:17px;height:16px;border-radius:3px;background:#4a4a4a"></div>
<svg style="left:28px;top:783px" width="13" height="12" viewBox="0 0 13 12"><g stroke="#c8c8c8" stroke-width="1.3" fill="none"><circle cx="5" cy="5" r="4.3"/><rect x="5" y="5" width="7.3" height="6.3" rx="1" fill="#4a4a4a"/></g><path d="M7 10l4-4v4z" fill="#c8c8c8"/></svg>
<div class="t" style="left:48px;top:782px;font-size:12px;font-weight:bold;color:#b8b8b8;letter-spacing:0.5px">{}</div>
<svg style="left:67px;top:784.5px" width="13" height="10" viewBox="0 0 13 10"><circle cx="4.5" cy="4.5" r="4.5" fill="#bdbdbd"/><rect x="0" y="7" width="9" height="3" fill="#bdbdbd"/><path d="M8 4h5v5H8z" fill="#6a6a6a"/></svg>
<div class="t" style="left:106.10px;top:784.90px;font-size:12px;color:#bdbdbd;-webkit-text-stroke-width:0.35px;transform:scaleX(0.8991)">Frame Render Time:</div>
<div class="t" style="left:209.90px;top:784.90px;font-size:12px;color:#2aa592;-webkit-text-stroke-width:0.35px;transform:scaleX(0.9304)">9ms</div>
<div class="t" style="left:315.20px;top:784.50px;font-size:12px;color:#c4c4c4;-webkit-text-stroke-width:0.35px;transform:scaleX(0.9143)">Toggle Switches / Modes</div>
<svg style="left:475px;top:786px" width="11" height="5" viewBox="0 0 11 5"><path d="M0 5L3 2 4.5 3 7 0 11 5z" fill="#c0c0c0"/></svg>
<svg style="left:495px;top:784px" width="12" height="11" viewBox="0 0 12 11"><circle cx="6" cy="5.5" r="4.3" stroke="#c8c8c8" stroke-width="2" fill="none"/></svg>
<div class="a" style="left:510px;top:788.3px;width:42px;height:1.5px;background:#8a8a8a"></div>
<svg style="left:556px;top:784.5px" width="17" height="8.5" viewBox="0 0 17 8.5"><path d="M0 8.5L4 3.5 5.5 5 9.5 0 17 8.5z" fill="#c8c8c8"/></svg>
<div class="a" style="left:577px;top:779.5px;width:196px;height:17.5px;background:#5a5a5a"></div>
</body></html>
